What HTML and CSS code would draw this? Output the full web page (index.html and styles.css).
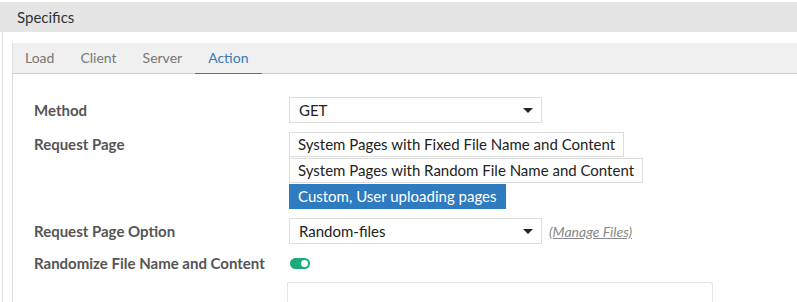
FILE: index.html
```html
<!DOCTYPE html>
<html>
<head>
    <title>Specifics</title>
    <link rel="stylesheet" href="styles.css">
</head>
<body>
    <div class="panel">
        <div class="panel-header">Specifics</div>
        <div class="panel-body">
            <div class="tabs">
                <div class="tab-bar">
                    <span class="tab">Load</span>
                    <span class="tab">Client</span>
                    <span class="tab">Server</span>
                    <span class="tab active">Action</span>
                </div>
                <div class="tab-content">
                    <div class="form-row">
                        <label class="form-label">Method</label>
                        <div class="form-field">
                            <div class="select">
                                <span>GET</span>
                                <span class="caret"></span>
                            </div>
                        </div>
                    </div>
                    <div class="form-row top">
                        <label class="form-label">Request Page</label>
                        <div class="form-field">
                            <div class="option-list">
                                <div class="option">System Pages with Fixed File Name and Content</div>
                                <div class="option">System Pages with Random File Name and Content</div>
                                <div class="option selected">Custom, User uploading pages</div>
                            </div>
                        </div>
                    </div>
                    <div class="form-row">
                        <label class="form-label">Request Page Option</label>
                        <div class="form-field">
                            <div class="select">
                                <span>Random-files</span>
                                <span class="caret"></span>
                            </div>
                            <a class="manage-link" href="#">(Manage Files)</a>
                        </div>
                    </div>
                    <div class="form-row">
                        <label class="form-label">Randomize File Name and Content</label>
                        <div class="form-field">
                            <span class="toggle"><span class="knob"></span></span>
                        </div>
                    </div>
                    <div class="form-row">
                        <label class="form-label"></label>
                        <div class="form-field">
                            <div class="next-input"></div>
                        </div>
                    </div>
                </div>
            </div>
        </div>
    </div>
</body>
</html>
```

FILE: styles.css
```css
* {
    box-sizing: border-box;
}

body {
    margin: 0;
    background-color: #fff;
    font-family: Lato, "Open Sans", sans-serif;
    font-size: 15px;
    color: #333;
    overflow: hidden;
}

.panel {
    padding-top: 2px;
}

.panel-header {
    height: 30px;
    line-height: 30px;
    background-color: #e5e5e5;
    padding-left: 17px;
    font-size: 15px;
    color: #333;
}

.panel-body {
    border-left: 1px solid #ddd;
    margin-left: 2px;
    padding: 11px 0 0 9px;
}

.tabs {
    border-left: 1px solid #ddd;
}

.tab-bar {
    display: flex;
    height: 31px;
    background-color: #f0f0f0;
    border-bottom: 1px solid #ccc;
}

.tab {
    padding: 0 13px;
    line-height: 30px;
    color: #777;
    font-size: 14px;
}

.tab:first-child {
    padding-left: 12px;
}

.tab.active {
    color: #3b79b8;
    border-bottom: 1px solid #3b79b8;
    margin-bottom: -1px;
}

.tab-content {
    padding: 23px 0 0 21px;
    display: flex;
    flex-direction: column;
    gap: 9px;
}

.form-row {
    display: flex;
    align-items: center;
}

.form-row.top {
    align-items: flex-start;
}

.form-label {
    width: 255px;
    font-weight: bold;
    color: #555;
    line-height: 20px;
}

.form-row.top .form-label {
    line-height: 24px;
}

.form-field {
    display: flex;
    align-items: center;
    gap: 7px;
}

.select {
    width: 253px;
    height: 26px;
    border: 1px solid #ddd;
    display: flex;
    align-items: center;
    justify-content: space-between;
    padding: 0 8px 0 9px;
    color: #222;
}

.caret {
    width: 0;
    height: 0;
    border-left: 5px solid transparent;
    border-right: 5px solid transparent;
    border-top: 5px solid #222;
}

.option-list {
    display: flex;
    flex-direction: column;
    align-items: flex-start;
    gap: 1px;
}

.option {
    height: 25px;
    line-height: 23px;
    border: 1px solid #ddd;
    padding: 0 8px;
    color: #222;
}

.option.selected {
    background-color: #2f7bbf;
    border-color: #2f7bbf;
    color: #fff;
}

.manage-link {
    color: #888;
    font-style: italic;
    font-size: 14px;
    text-decoration: underline;
}

.toggle {
    display: inline-flex;
    justify-content: flex-end;
    align-items: center;
    width: 20px;
    height: 11px;
    border-radius: 6px;
    background-color: #1aab7a;
    margin: 4px 0 4px 1px;
}

.knob {
    width: 7px;
    height: 7px;
    border-radius: 50%;
    background-color: #fff;
    margin-right: 2px;
}

.next-input {
    width: 426px;
    height: 24px;
    margin-left: -2px;
    border: 1px solid #e5e5e5;
    border-bottom: none;
    border-radius: 0 3px 0 0;
}
```
